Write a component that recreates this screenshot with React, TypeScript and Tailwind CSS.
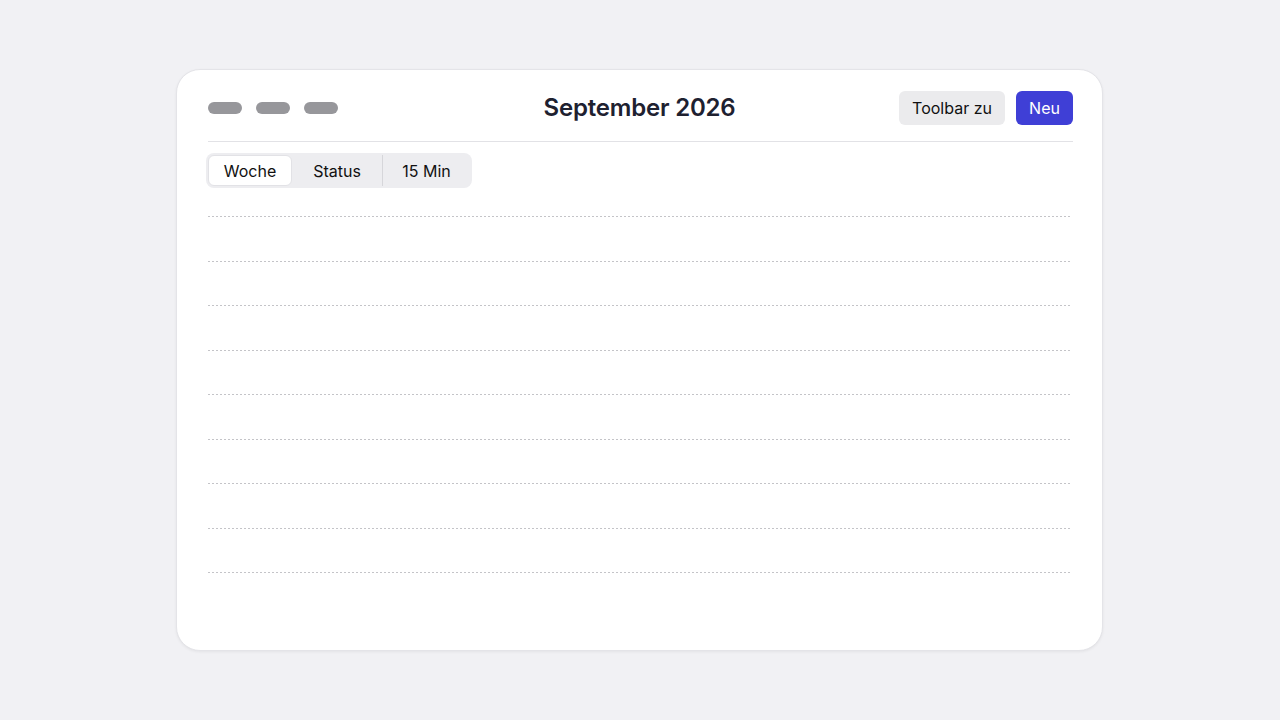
import React from "react";

const rows = [0, 1, 2, 3, 4, 5, 6, 7, 8];

export default function App() {
  return (
    <div
      className="min-h-screen w-full bg-[#f1f1f4] pt-[69px]"
      style={{ fontFamily: "Inter, 'Noto Sans', sans-serif" }}
    >
      <div className="ml-[176px] h-[582px] w-[927px] rounded-[24px] border border-[#e4e4e8] bg-white shadow-[0_1px_3px_rgba(0,0,0,0.06)]">
        {/* header */}
        <div className="relative mt-[21px] flex h-[34px] items-center justify-between pl-[31px] pr-[29px]">
          <div className="flex gap-[14px]">
            <span className="h-[12px] w-[34px] rounded-full bg-[#97979b]" />
            <span className="h-[12px] w-[34px] rounded-full bg-[#97979b]" />
            <span className="h-[12px] w-[34px] rounded-full bg-[#97979b]" />
          </div>
          <h1 className="absolute left-1/2 -translate-x-1/2 text-[24px] font-semibold tracking-[-0.2px] text-[#1e2130]">
            September 2026
          </h1>
          <div className="flex gap-[11px]">
            <button className="h-[34px] w-[106px] rounded-md bg-[#ebebed] text-[16px] text-[#111]">
              Toolbar zu
            </button>
            <button className="h-[34px] w-[57px] rounded-md bg-[#3f3fd6] text-[16px] text-white">
              Neu
            </button>
          </div>
        </div>
        <div className="ml-[31px] mr-[29px] mt-[16px] h-px bg-[#e2e2e6]" />

        {/* segmented control */}
        <div className="pl-[29px] pt-[11px]">
          <div className="inline-flex h-[35px] items-stretch rounded-lg bg-[#ededf0] p-[2px] text-[16px] text-[#111]">
            <button className="w-[84px] rounded-md border border-[#e2e2e6] bg-white">Woche</button>
            <button className="w-[91px] border-r border-[#d6d6da]">Status</button>
            <button className="w-[87px]">15 Min</button>
          </div>
        </div>

        {/* rows */}
        <div className="ml-[31px] mr-[32px] mt-[28px] flex flex-col gap-[43.5px]">
          {rows.map((r) => (
            <div
              key={r}
              className="h-px bg-[repeating-linear-gradient(to_right,#c4c4c8_0_2px,transparent_2px_4px)]"
            />
          ))}
        </div>
      </div>
    </div>
  );
}
